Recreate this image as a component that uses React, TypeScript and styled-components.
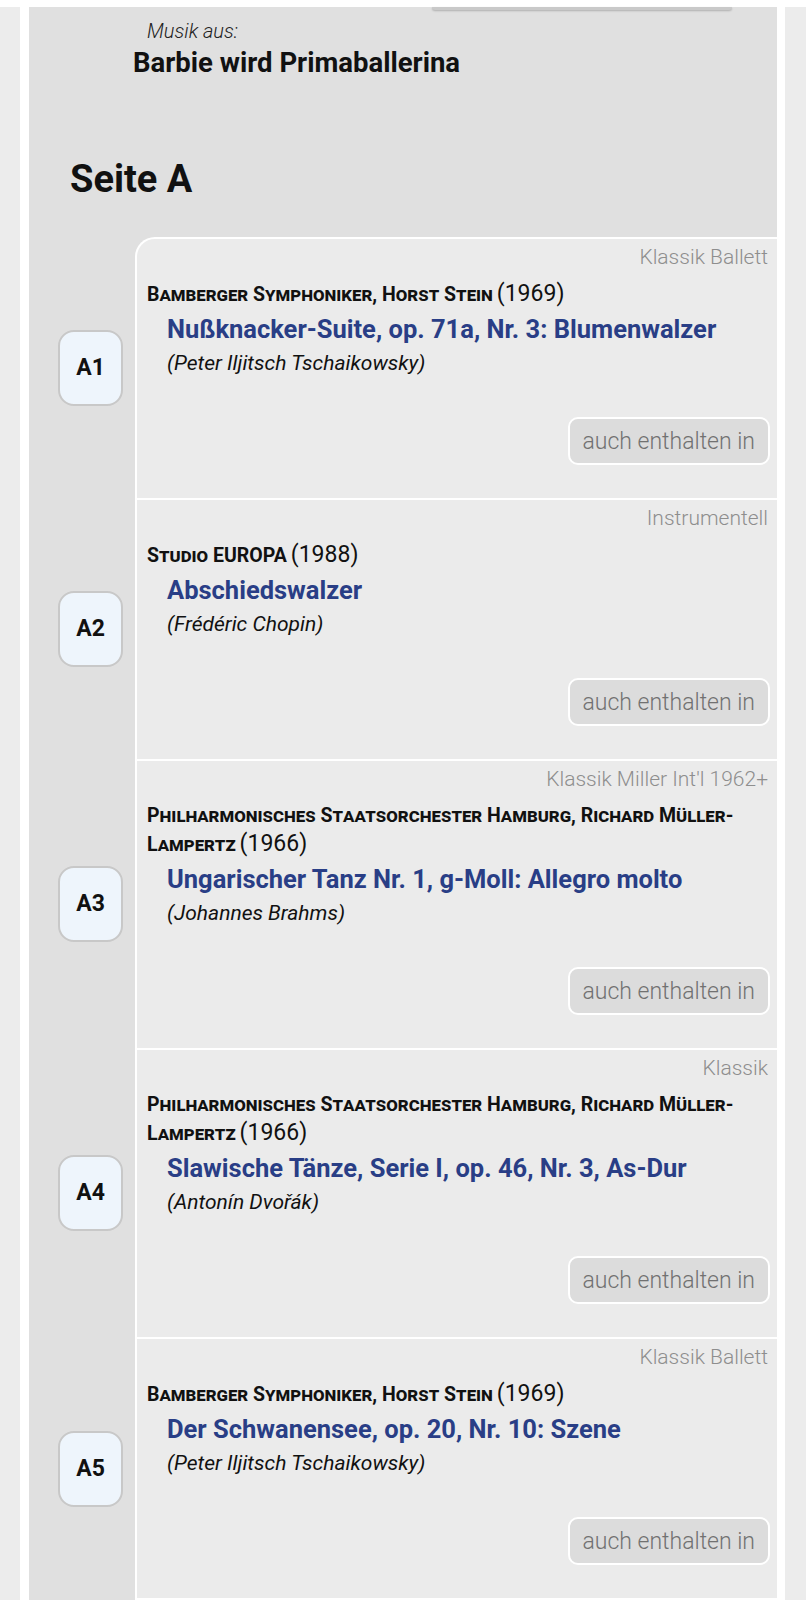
import React from "react";
import styled, { createGlobalStyle } from "styled-components";

const GlobalStyle = createGlobalStyle`
  html, body {
    margin: 0;
    padding: 0;
    background: #ffffff;
  }
  body {
    font-family: Roboto, "Liberation Sans", sans-serif;
    color: #111;
  }
`;

const Page = styled.div`
  padding-top: 7px;
  background: #ffffff;
`;

const Frame = styled.div`
  background: #ececec;
  padding: 0 21px 0 20px;
`;

const Panel = styled.main`
  background: #e0e0e0;
  border-left: 9px solid #ffffff;
  border-right: 8px solid #ffffff;
  min-height: 1600px;
`;

const HeaderTab = styled.div`
  width: 300px;
  height: 3px;
  margin: 0 45px 0 auto;
  background: #c9c9c9;
  border-radius: 0 0 4px 4px;
  box-shadow: 0 1px 2px rgba(0, 0, 0, 0.22);
`;

const SourceLabel = styled.div`
  margin: 9px 0 0 118px;
  font-size: 20px;
  line-height: 24px;
  font-weight: 300;
  font-style: italic;
  color: #222;
`;

const SourceTitle = styled.h1`
  margin: 4px 0 0 104px;
  font-size: 27.5px;
  line-height: 32px;
  font-weight: 700;
`;

const SideHeading = styled.h2`
  margin: 77px 0 0 41px;
  font-size: 38px;
  line-height: 46px;
  font-weight: 700;
`;

const TrackList = styled.ol`
  list-style: none;
  margin: 35px 0 0;
  padding: 0;
`;

const TrackRow = styled.li`
  display: flex;
  align-items: stretch;
`;

const NumberCell = styled.div`
  width: 106px;
  flex: none;
  display: flex;
  align-items: center;
  padding-left: 29px;
  box-sizing: border-box;
`;

const TrackNumber = styled.div`
  width: 65px;
  height: 76px;
  box-sizing: border-box;
  display: flex;
  align-items: center;
  justify-content: center;
  background: #eef5fc;
  border: 2px solid #c8c8c8;
  border-radius: 16px;
  font-size: 23px;
  font-weight: 700;
  color: #111;
`;

const TrackCard = styled.div<{ $first?: boolean; $last?: boolean }>`
  flex: 1;
  min-width: 0;
  display: flex;
  flex-direction: column;
  background: #ebebeb;
  border-left: 2px solid #ffffff;
  border-top: 2px solid #ffffff;
  border-bottom: ${(p) => (p.$last ? "2px solid #ffffff" : "none")};
  border-top-left-radius: ${(p) => (p.$first ? "20px" : "0")};
  padding: 6px 7px 33px 10px;
`;

const Genre = styled.div`
  align-self: flex-end;
  margin-right: 2px;
  font-size: 21px;
  line-height: 24px;
  font-weight: 300;
  color: #8e8e8e;
`;

const Artist = styled.div`
  margin-top: 11px;
  line-height: 27px;
  padding-right: 20px;
`;

const ArtistName = styled.span`
  font-size: 19.5px;
  font-weight: 700;
  font-variant: small-caps;
`;

const Year = styled.span`
  font-size: 23px;
  font-weight: 400;
`;

const WorkTitle = styled.a`
  display: block;
  margin: 5px 0 0 20px;
  font-size: 25.5px;
  line-height: 30px;
  font-weight: 700;
  color: #293e86;
  text-decoration: none;
`;

const Composer = styled.div`
  margin: 7px 0 0 20px;
  font-size: 21px;
  line-height: 24px;
  font-style: italic;
  color: #111;
`;

const AlsoInButton = styled.button`
  align-self: flex-end;
  margin-top: 42px;
  height: 48px;
  padding: 0 13px;
  box-sizing: border-box;
  background: #dcdcdc;
  border: 2px solid #ffffff;
  border-radius: 10px;
  font-family: Roboto, "Liberation Sans", sans-serif;
  font-size: 23px;
  font-weight: 300;
  color: #717171;
`;

interface ITrack {
  side: string;
  genre: string;
  artist: string;
  year: string;
  title: string;
  composer: string;
}

const tracks: ITrack[] = [
  {
    side: "A1",
    genre: "Klassik Ballett",
    artist: "Bamberger Symphoniker, Horst Stein",
    year: "1969",
    title: "Nußknacker-Suite, op. 71a, Nr. 3: Blumenwalzer",
    composer: "Peter Iljitsch Tschaikowsky",
  },
  {
    side: "A2",
    genre: "Instrumentell",
    artist: "Studio EUROPA",
    year: "1988",
    title: "Abschiedswalzer",
    composer: "Frédéric Chopin",
  },
  {
    side: "A3",
    genre: "Klassik Miller Int'l 1962+",
    artist: "Philharmonisches Staatsorchester Hamburg, Richard Müller-Lampertz",
    year: "1966",
    title: "Ungarischer Tanz Nr. 1, g-Moll: Allegro molto",
    composer: "Johannes Brahms",
  },
  {
    side: "A4",
    genre: "Klassik",
    artist: "Philharmonisches Staatsorchester Hamburg, Richard Müller-Lampertz",
    year: "1966",
    title: "Slawische Tänze, Serie I, op. 46, Nr. 3, As-Dur",
    composer: "Antonín Dvořák",
  },
  {
    side: "A5",
    genre: "Klassik Ballett",
    artist: "Bamberger Symphoniker, Horst Stein",
    year: "1969",
    title: "Der Schwanensee, op. 20, Nr. 10: Szene",
    composer: "Peter Iljitsch Tschaikowsky",
  },
];

export default function App() {
  return (
    <Page>
      <GlobalStyle />
      <Frame>
        <Panel>
          <HeaderTab />
          <SourceLabel>Musik aus:</SourceLabel>
          <SourceTitle>Barbie wird Primaballerina</SourceTitle>
          <SideHeading>Seite A</SideHeading>
          <TrackList>
            {tracks.map((t, i) => (
              <TrackRow key={t.side}>
                <NumberCell>
                  <TrackNumber>{t.side}</TrackNumber>
                </NumberCell>
                <TrackCard $first={i === 0} $last={i === tracks.length - 1}>
                  <Genre>{t.genre}</Genre>
                  <Artist>
                    <ArtistName>{t.artist}</ArtistName> <Year>({t.year})</Year>
                  </Artist>
                  <WorkTitle href="#">{t.title}</WorkTitle>
                  <Composer>({t.composer})</Composer>
                  <AlsoInButton>auch enthalten in</AlsoInButton>
                </TrackCard>
              </TrackRow>
            ))}
          </TrackList>
        </Panel>
      </Frame>
    </Page>
  );
}
